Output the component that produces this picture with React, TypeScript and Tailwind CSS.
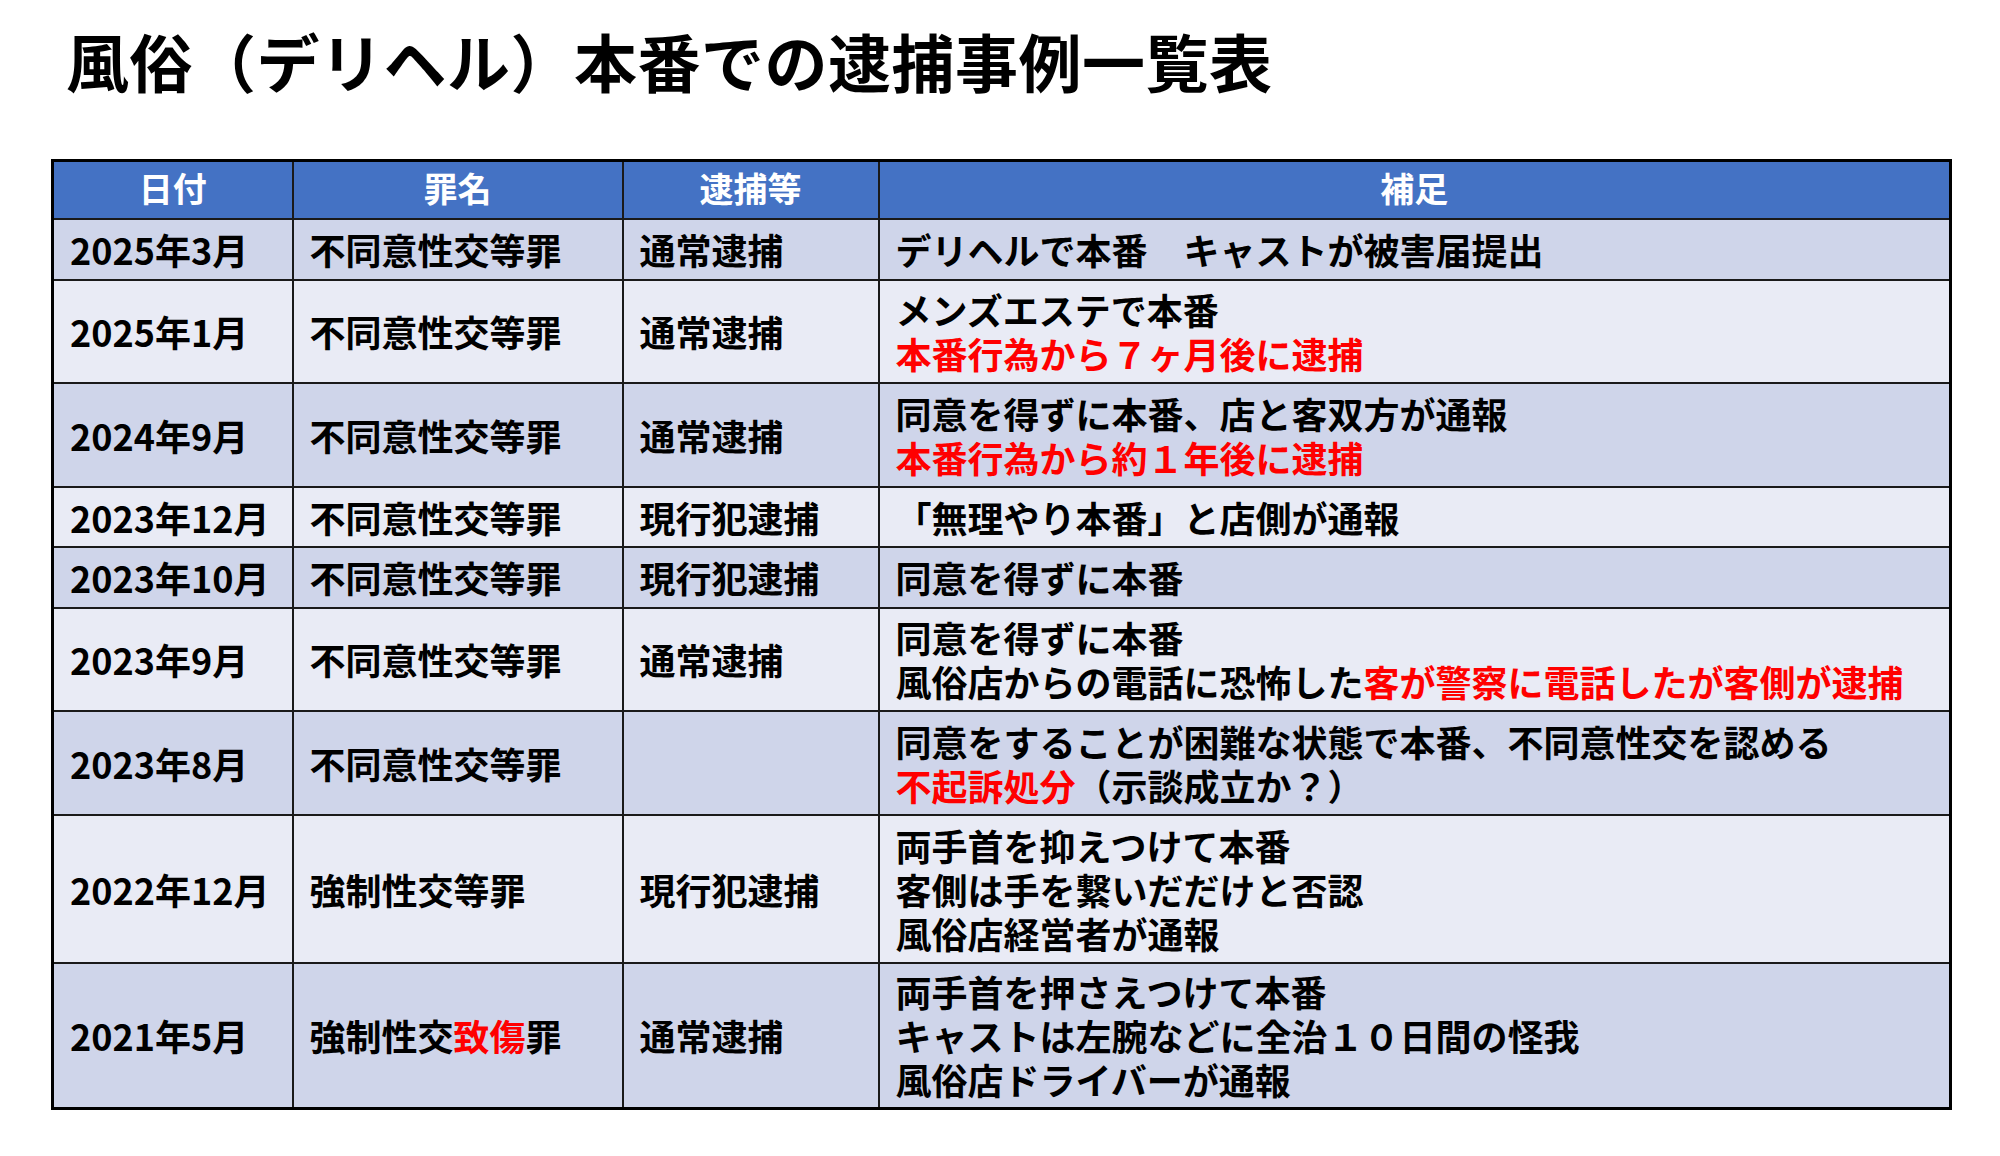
import React from "react";

type Part = { t: string; red?: boolean };
type Row = {
  date: string;
  crime: Part[];
  arrest: string;
  notes: Part[][];
  h: string;
};

const rows: Row[] = [
  {
    date: "2025年3月",
    crime: [{ t: "不同意性交等罪" }],
    arrest: "通常逮捕",
    notes: [[{ t: "デリヘルで本番　キャストが被害届提出" }]],
    h: "h-[61px]",
  },
  {
    date: "2025年1月",
    crime: [{ t: "不同意性交等罪" }],
    arrest: "通常逮捕",
    notes: [[{ t: "メンズエステで本番" }], [{ t: "本番行為から７ヶ月後に逮捕", red: true }]],
    h: "h-[103px]",
  },
  {
    date: "2024年9月",
    crime: [{ t: "不同意性交等罪" }],
    arrest: "通常逮捕",
    notes: [
      [{ t: "同意を得ずに本番、店と客双方が通報" }],
      [{ t: "本番行為から約１年後に逮捕", red: true }],
    ],
    h: "h-[104px]",
  },
  {
    date: "2023年12月",
    crime: [{ t: "不同意性交等罪" }],
    arrest: "現行犯逮捕",
    notes: [[{ t: "「無理やり本番」と店側が通報" }]],
    h: "h-[60px]",
  },
  {
    date: "2023年10月",
    crime: [{ t: "不同意性交等罪" }],
    arrest: "現行犯逮捕",
    notes: [[{ t: "同意を得ずに本番" }]],
    h: "h-[61px]",
  },
  {
    date: "2023年9月",
    crime: [{ t: "不同意性交等罪" }],
    arrest: "通常逮捕",
    notes: [
      [{ t: "同意を得ずに本番" }],
      [{ t: "風俗店からの電話に恐怖した" }, { t: "客が警察に電話したが客側が逮捕", red: true }],
    ],
    h: "h-[103px]",
  },
  {
    date: "2023年8月",
    crime: [{ t: "不同意性交等罪" }],
    arrest: "",
    notes: [
      [{ t: "同意をすることが困難な状態で本番、不同意性交を認める" }],
      [{ t: "不起訴処分", red: true }, { t: "（示談成立か？）" }],
    ],
    h: "h-[104px]",
  },
  {
    date: "2022年12月",
    crime: [{ t: "強制性交等罪" }],
    arrest: "現行犯逮捕",
    notes: [
      [{ t: "両手首を抑えつけて本番" }],
      [{ t: "客側は手を繋いだだけと否認" }],
      [{ t: "風俗店経営者が通報" }],
    ],
    h: "h-[148px]",
  },
  {
    date: "2021年5月",
    crime: [{ t: "強制性交" }, { t: "致傷", red: true }, { t: "罪" }],
    arrest: "通常逮捕",
    notes: [
      [{ t: "両手首を押さえつけて本番" }],
      [{ t: "キャストは左腕などに全治１０日間の怪我" }],
      [{ t: "風俗店ドライバーが通報" }],
    ],
    h: "h-[146px]",
  },
];

function Parts({ parts }: { parts: Part[] }) {
  return (
    <>
      {parts.map((p, i) => (
        <span key={i} className={p.red ? "text-[#ff0000]" : ""}>
          {p.t}
        </span>
      ))}
    </>
  );
}

const cell = "border-2 border-[#1a1a1a] px-4 align-middle";

export default function App() {
  return (
    <div
      className="min-h-screen w-[2000px] bg-white text-black"
      style={{ fontFamily: '"Noto Sans CJK JP", "Noto Sans", sans-serif' }}
    >
      <h1 className="pl-[66px] pt-[24px] text-[63px] font-bold leading-[72px] tracking-[0.5px]">
        風俗（デリヘル）本番での逮捕事例一覧表
      </h1>

      <div className="mt-[63px] pl-[51px]">
        <table className="w-[1898px] table-fixed border-collapse border-[3px] border-black text-[36px] font-bold leading-[44px]">
          <colgroup>
            <col className="w-[240px]" />
            <col className="w-[330px]" />
            <col className="w-[256px]" />
            <col className="w-[1072px]" />
          </colgroup>
          <thead>
            <tr className="h-[58px] bg-[#4472c4] text-white">
              <th className={`${cell} pb-[3px] text-center text-[34px]`}>日付</th>
              <th className={`${cell} pb-[3px] text-center text-[34px]`}>罪名</th>
              <th className={`${cell} pb-[3px] text-center text-[34px]`}>逮捕等</th>
              <th className={`${cell} pb-[3px] text-center text-[34px]`}>補足</th>
            </tr>
          </thead>
          <tbody>
            {rows.map((r, i) => (
              <tr key={i} className={`${r.h} ${i % 2 === 0 ? "bg-[#cfd5ea]" : "bg-[#e9ebf5]"}`}>
                <td className={cell}>{r.date}</td>
                <td className={cell}>
                  <Parts parts={r.crime} />
                </td>
                <td className={cell}>{r.arrest}</td>
                <td className={`${cell} whitespace-nowrap`}>
                  {r.notes.map((line, j) => (
                    <div key={j}>
                      <Parts parts={line} />
                    </div>
                  ))}
                </td>
              </tr>
            ))}
          </tbody>
        </table>
      </div>
    </div>
  );
}
